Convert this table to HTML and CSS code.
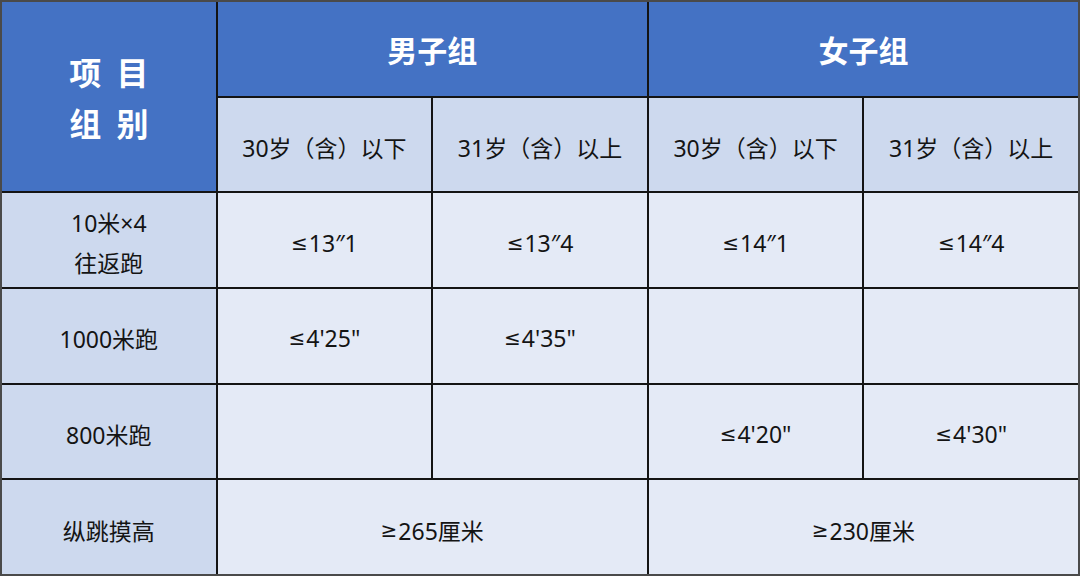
FILE: index.html
```html
<!DOCTYPE html>
<html lang="zh">
<head>
<meta charset="utf-8">
<link rel="stylesheet" href="styles.css">
</head>
<body>
<div class="table">
  <div class="cell blue corner"><span>项 目</span><span>组 别</span></div>
  <div class="cell blue group span2">男子组</div>
  <div class="cell blue group span2">女子组</div>

  <div class="cell light">30岁（含）以下</div>
  <div class="cell light">31岁（含）以上</div>
  <div class="cell light">30岁（含）以下</div>
  <div class="cell light">31岁（含）以上</div>

  <div class="cell light two"><span>10米×4</span><span>往返跑</span></div>
  <div class="cell pale"><span class="sym">≤</span>13″1</div>
  <div class="cell pale"><span class="sym">≤</span>13″4</div>
  <div class="cell pale"><span class="sym">≤</span>14″1</div>
  <div class="cell pale"><span class="sym">≤</span>14″4</div>

  <div class="cell light">1000米跑</div>
  <div class="cell pale"><span class="sym">≤</span>4'25"</div>
  <div class="cell pale"><span class="sym">≤</span>4'35"</div>
  <div class="cell pale"></div>
  <div class="cell pale"></div>

  <div class="cell light">800米跑</div>
  <div class="cell pale"></div>
  <div class="cell pale"></div>
  <div class="cell pale"><span class="sym">≤</span>4'20"</div>
  <div class="cell pale"><span class="sym">≤</span>4'30"</div>

  <div class="cell light">纵跳摸高</div>
  <div class="cell pale span2"><span class="sym">≥</span>265厘米</div>
  <div class="cell pale span2"><span class="sym">≥</span>230厘米</div>
</div>
</body>
</html>
```
FILE: styles.css
```css
html, body {
  margin: 0;
  padding: 0;
  background: #ffffff;
}
.table {
  box-sizing: border-box;
  width: 1080px;
  height: 576px;
  border: 2px solid #4a4a4a;
  background: #141414;
  display: grid;
  grid-template-columns: repeat(5, 1fr);
  grid-template-rows: repeat(6, 1fr);
  gap: 2px;
  font-family: "Noto Sans", "Noto Sans CJK SC", sans-serif;
  color: #141414;
  font-size: 23px;
}
.cell {
  display: flex;
  align-items: center;
  justify-content: center;
  text-align: center;
  padding-top: 5px;
  box-sizing: border-box;
  white-space: pre;
}
.sym {
  font-family: "DejaVu Sans", "Liberation Sans", sans-serif;
  font-size: 20px;
  margin-right: 1px;
}
.blue {
  background: #4472c4;
  color: #ffffff;
  font-weight: 700;
}
.light {
  background: #cdd9ee;
}
.pale {
  background: #e4eaf6;
}
.span2 {
  grid-column: span 2;
}
.corner {
  grid-row: span 2;
  flex-direction: column;
  font-size: 32px;
  line-height: 51px;
  padding-top: 0;
  word-spacing: 8px;
  font-family: "Noto Sans CJK SC", sans-serif;
}
.group {
  font-size: 30px;
  font-family: "Noto Sans CJK SC", sans-serif;
  padding-top: 0;
}
.two {
  flex-direction: column;
  line-height: 40px;
  padding-top: 6px;
}
```
